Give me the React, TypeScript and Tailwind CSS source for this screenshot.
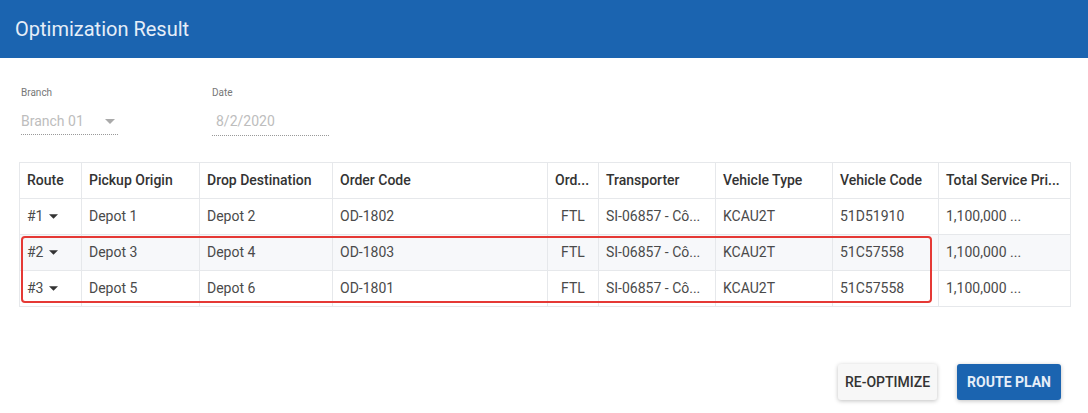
import React from "react"

const cols = [62, 118, 133, 215, 51, 117, 117, 106, 132]

const headers = [
  "Route",
  "Pickup Origin",
  "Drop Destination",
  "Order Code",
  "Ord...",
  "Transporter",
  "Vehicle Type",
  "Vehicle Code",
  "Total Service Pri...",
]

const rows = [
  { route: "#1", from: "Depot 1", to: "Depot 2", order: "OD-1802", vcode: "51D51910", bg: "bg-white" },
  { route: "#2", from: "Depot 3", to: "Depot 4", order: "OD-1803", vcode: "51C57558", bg: "bg-[#f7f8fa]" },
  { route: "#3", from: "Depot 5", to: "Depot 6", order: "OD-1801", vcode: "51C57558", bg: "bg-white" },
]

function Caret({ className }: { className?: string }) {
  return (
    <svg width="10" height="5" viewBox="0 0 10 5" className={className}>
      <path d="M0 0 L10 0 L5 5 Z" fill="currentColor" />
    </svg>
  )
}

export default function App() {
  return (
    <div className="w-[1088px] h-[413px] bg-white font-['Roboto',sans-serif] overflow-hidden">
      {/* Header */}
      <div className="h-[58px] bg-[#1b64b0] flex items-center px-[15px]">
        <h1 className="text-[20px] text-[#e6eef8] font-normal">Optimization Result</h1>
      </div>

      {/* Filters */}
      <div className="flex pl-[21px] pt-[28px] gap-[94px]">
        <div className="w-[97px]">
          <div className="text-[10px] text-[#777] leading-[14px]">Branch</div>
          <div className="flex items-center justify-between mt-[11px] h-[20px] text-[14px] text-[#bdbdbd]">
            <span>Branch 01</span>
            <Caret className="text-[#aaa] mr-[3px]" />
          </div>
          <div className="border-b border-dotted border-[#999] mt-[3px]" />
        </div>
        <div className="w-[117px]">
          <div className="text-[10px] text-[#777] leading-[14px]">Date</div>
          <div className="flex items-center mt-[11px] h-[20px] pl-[4px] text-[14px] text-[#bdbdbd]">
            <span>8/2/2020</span>
          </div>
          <div className="border-b border-dotted border-[#999] mt-[4px]" />
        </div>
      </div>

      {/* Table */}
      <div className="relative ml-[19px] mt-[26px] w-[1051px]">
        <table className="table-fixed border-collapse w-[1051px] text-[14px]">
          <colgroup>
            {cols.map((w, i) => (
              <col key={i} style={{ width: w }} />
            ))}
          </colgroup>
          <thead>
            <tr className="h-[36px]">
              {headers.map((h) => (
                <th
                  key={h}
                  className="border border-[#e6e8eb] px-[7px] font-medium text-[#333] text-left whitespace-nowrap overflow-hidden"
                >
                  {h}
                </th>
              ))}
            </tr>
          </thead>
          <tbody>
            {rows.map((r) => (
              <tr key={r.route} className={`h-[36px] ${r.bg}`}>
                <td className="border border-[#e6e8eb] px-[7px] text-[#4a4a4a]">
                  <span className="inline-flex items-center gap-[5px]">
                    {r.route}
                    <Caret className="text-[#333] w-[9px]" />
                  </span>
                </td>
                <td className="border border-[#e6e8eb] px-[7px] text-[#4a4a4a]">{r.from}</td>
                <td className="border border-[#e6e8eb] px-[7px] text-[#4a4a4a]">{r.to}</td>
                <td className="border border-[#e6e8eb] px-[7px] text-[#4a4a4a]">{r.order}</td>
                <td className="border border-[#e6e8eb] px-[7px] text-[#4a4a4a] text-center">FTL</td>
                <td className="border border-[#e6e8eb] px-[7px] text-[#4a4a4a] whitespace-nowrap overflow-hidden">SI-06857 - Cô...</td>
                <td className="border border-[#e6e8eb] px-[7px] text-[#4a4a4a]">KCAU2T</td>
                <td className="border border-[#e6e8eb] px-[7px] text-[#4a4a4a]">{r.vcode}</td>
                <td className="border border-[#e6e8eb] px-[7px] text-[#4a4a4a] whitespace-nowrap overflow-hidden">1,100,000 ...</td>
              </tr>
            ))}
          </tbody>
        </table>
        {/* Highlight of selected routes */}
        <div className="absolute left-[2px] top-[74px] w-[911px] h-[67px] border-2 border-[#e53935] rounded-[4px] pointer-events-none" />
      </div>

      {/* Actions */}
      <div className="flex justify-end gap-[20px] pr-[27px] mt-[57px]">
        <button className="h-[36px] px-[7px] bg-[#f7f7f7] text-[#333] text-[14px] font-medium rounded-[3px] shadow-[0_1px_4px_rgba(0,0,0,0.25)]">
          RE-OPTIMIZE
        </button>
        <button className="h-[36px] px-[10px] bg-[#1b64b0] text-[#e6eef8] text-[14px] font-bold rounded-[3px] shadow-[0_1px_4px_rgba(0,0,0,0.25)]">
          ROUTE PLAN
        </button>
      </div>
    </div>
  )
}
